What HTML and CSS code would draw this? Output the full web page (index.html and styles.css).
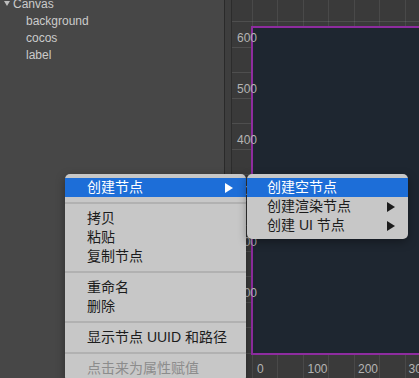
FILE: index.html
```html
<!DOCTYPE html>
<html lang="zh-CN">
<head>
    <meta charset="UTF-8">
    <meta name="viewport" content="width=device-width, initial-scale=1.0">
    <title>场景编辑器</title>
    <link rel="stylesheet" href="styles.css">
</head>
<body>
    <div class="editor">
        <!-- Panneau de hiérarchie -->
        <aside class="hierarchy">
            <ul class="tree">
                <li><span class="caret"></span>Canvas
                    <ul>
                        <li>background</li>
                        <li>cocos</li>
                        <li>label</li>
                    </ul>
                </li>
            </ul>
        </aside>

        <div class="splitter"></div>

        <!-- Vue de la scène -->
        <main class="scene">
            <div class="ruler-y">
                <span>600</span>
                <span>500</span>
                <span>400</span>
                <span>300</span>
                <span>200</span>
                <span>100</span>
            </div>
            <div class="design"></div>
            <div class="ruler-x">
                <span>0</span>
                <span>100</span>
                <span>200</span>
                <span>300</span>
            </div>
        </main>
    </div>

    <!-- Menu contextuel -->
    <div class="menu main-menu">
        <div class="item active">创建节点
            <svg class="arrow" width="8" height="10" viewBox="0 0 8 10"><polygon points="0,0 8,5 0,10"/></svg>
        </div>
        <div class="sep"></div>
        <div class="item">拷贝</div>
        <div class="item">粘贴</div>
        <div class="item">复制节点</div>
        <div class="sep"></div>
        <div class="item">重命名</div>
        <div class="item">删除</div>
        <div class="sep"></div>
        <div class="item">显示节点 UUID 和路径</div>
        <div class="sep"></div>
        <div class="item disabled">点击来为属性赋值</div>
    </div>

    <div class="menu sub-menu">
        <div class="item active">创建空节点</div>
        <div class="item">创建渲染节点
            <svg class="arrow" width="8" height="10" viewBox="0 0 8 10"><polygon points="0,0 8,5 0,10"/></svg>
        </div>
        <div class="item">创建 UI 节点
            <svg class="arrow" width="8" height="10" viewBox="0 0 8 10"><polygon points="0,0 8,5 0,10"/></svg>
        </div>
    </div>
</body>
</html>
```

FILE: styles.css
```css
body {
    margin: 0;
    width: 419px;
    height: 378px;
    overflow: hidden;
    background-color: #474747;
    font-family: "Liberation Sans", "Noto Sans CJK SC", sans-serif;
}

.editor {
    display: flex;
    height: 378px;
}

/* Hiérarchie */
.hierarchy {
    width: 224px;
    flex-shrink: 0;
    background-color: #474747;
}

.tree {
    list-style: none;
    margin: -4px 0 0;
    padding: 0 0 0 4px;
    font-size: 12px;
    line-height: 17px;
    color: #cbcbcb;
}

.tree ul {
    list-style: none;
    margin: 0;
    padding-left: 22px;
}

.caret {
    display: inline-block;
    width: 0;
    height: 0;
    border-left: 3.5px solid transparent;
    border-right: 3.5px solid transparent;
    border-top: 5px solid #bdbdbd;
    margin-right: 3px;
    vertical-align: 2px;
}

.splitter {
    width: 6px;
    flex-shrink: 0;
    background-color: #3e3e3e;
    border-left: 1px solid #2a2a2a;
    border-right: 1px solid #2c2c2c;
}

/* Scène */
.scene {
    flex: 1;
    display: grid;
    grid-template-columns: 19px 1fr;
    grid-template-rows: 26px 329px 1fr;
    background-color: #3a3a3a;
    background-image:
        linear-gradient(to right, rgba(255, 255, 255, 0.08) 1px, transparent 1px),
        linear-gradient(to right, rgba(255, 255, 255, 0.08) 1px, transparent 1px),
        linear-gradient(to bottom, rgba(255, 255, 255, 0.1) 1px, transparent 1px),
        linear-gradient(to bottom, rgba(255, 255, 255, 0.1) 1px, transparent 1px);
    background-size: 51px 100%, 51px 100%, 100% 51px, 100% 51px;
    background-position: 20px 0, 45px 0, 0 -4px, 0 21px;
    overflow: hidden;
}

.ruler-y {
    grid-row: 2;
    grid-column: 1;
    position: relative;
    z-index: 1;
    padding: 5px 0 0 5px;
    font-size: 12px;
    line-height: 14px;
    color: #b4b4b4;
}

.ruler-y span {
    display: block;
    height: 51px;
    white-space: nowrap;
}

.design {
    grid-row: 2;
    grid-column: 2;
    background-color: #1e2630;
    border: 2px solid #8e2c9f;
    border-right: none;
}

.ruler-x {
    grid-row: 3;
    grid-column: 2;
    display: flex;
    padding: 7px 0 0 6px;
    font-size: 12px;
    line-height: 14px;
    color: #b4b4b4;
    white-space: nowrap;
}

.ruler-x span {
    flex: 0 0 50.5px;
}

/* Menu contextuel */
.menu {
    position: absolute;
    z-index: 2;
    top: 174px;
    padding: 4px 0;
    background-color: #c7c7c7;
    border-radius: 5px;
    box-shadow: 0 3px 10px rgba(0, 0, 0, 0.35);
    font-size: 14px;
    line-height: 19px;
    color: #1c1c1c;
}

.main-menu {
    left: 65px;
    width: 181px;
}

.sub-menu {
    left: 247px;
    width: 161px;
    z-index: 3;
}

.item {
    display: flex;
    justify-content: space-between;
    align-items: center;
    height: 19px;
    padding: 0 13px 0 22px;
    white-space: nowrap;
}

.sub-menu .item {
    padding-left: 20px;
}

.item.active {
    background-color: #1d6ed8;
    color: #fff;
}

.item.disabled {
    color: #8c8c8c;
}

.arrow {
    fill: currentColor;
}

.sep {
    height: 2px;
    margin: 5px 0;
    background-color: #b1b1b1;
}
```
